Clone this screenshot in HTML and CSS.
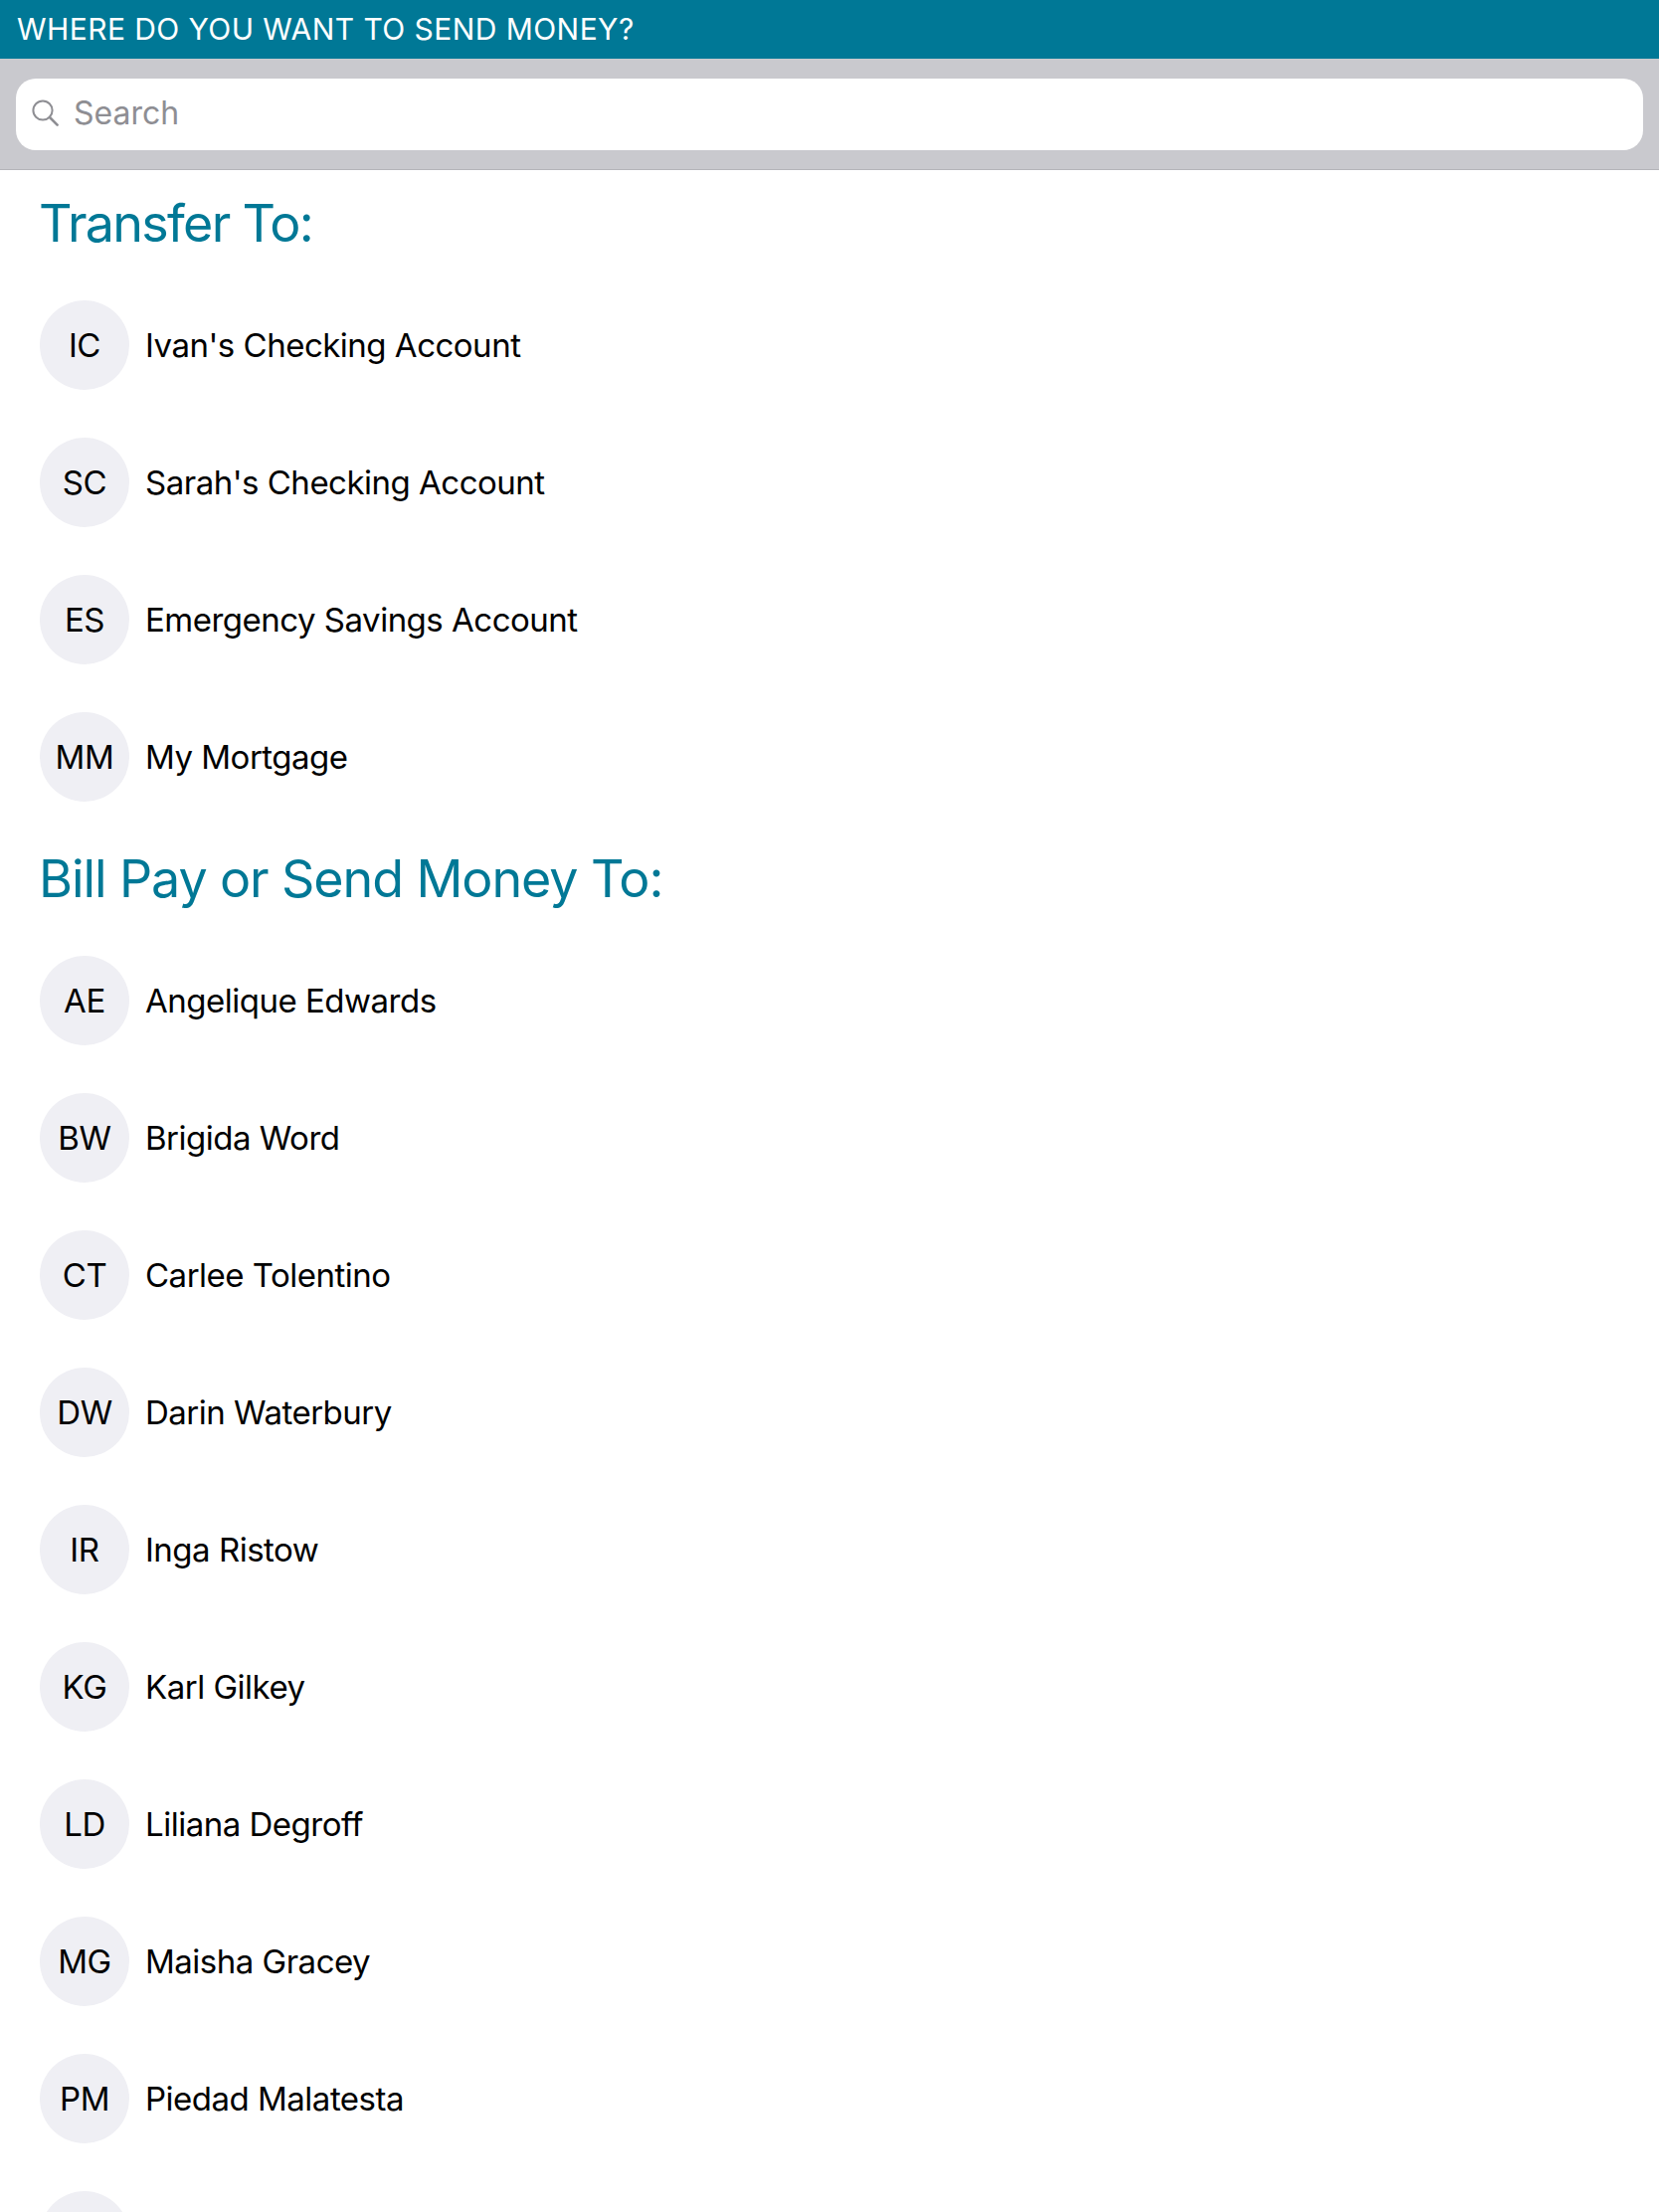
FILE: index.html
```html
<!DOCTYPE html>
<html lang="en">
<head>
    <meta charset="UTF-8">
    <meta name="viewport" content="width=device-width, initial-scale=1.0">
    <title>Where do you want to send money?</title>
    <link rel="stylesheet" href="styles.css">
</head>
<body>
    <div class="top-bar">WHERE DO YOU WANT TO SEND MONEY?</div>

    <div class="search-bar">
        <div class="search-field">
            <svg class="search-icon" viewBox="0 0 27 27" width="27" height="27" aria-hidden="true">
                <circle cx="11" cy="11" r="9.6" fill="none" stroke="#8e8e93" stroke-width="2"></circle>
                <path d="M18 18 L25.6 25.6" fill="none" stroke="#8e8e93" stroke-width="2.6" stroke-linecap="round"></path>
            </svg>
            <span class="search-text">Search</span>
        </div>
    </div>

    <div class="content">
        <h2 class="section-title first">Transfer To:</h2>
        <div class="row"><div class="avatar">IC</div><div class="name">Ivan's Checking Account</div></div>
        <div class="row"><div class="avatar">SC</div><div class="name">Sarah's Checking Account</div></div>
        <div class="row"><div class="avatar">ES</div><div class="name">Emergency Savings Account</div></div>
        <div class="row"><div class="avatar">MM</div><div class="name">My Mortgage</div></div>

        <h2 class="section-title">Bill Pay or Send Money To:</h2>
        <div class="row"><div class="avatar">AE</div><div class="name">Angelique Edwards</div></div>
        <div class="row"><div class="avatar">BW</div><div class="name">Brigida Word</div></div>
        <div class="row"><div class="avatar">CT</div><div class="name">Carlee Tolentino</div></div>
        <div class="row"><div class="avatar">DW</div><div class="name">Darin Waterbury</div></div>
        <div class="row"><div class="avatar">IR</div><div class="name">Inga Ristow</div></div>
        <div class="row"><div class="avatar">KG</div><div class="name">Karl Gilkey</div></div>
        <div class="row"><div class="avatar">LD</div><div class="name">Liliana Degroff</div></div>
        <div class="row"><div class="avatar">MG</div><div class="name">Maisha Gracey</div></div>
        <div class="row"><div class="avatar">PM</div><div class="name">Piedad Malatesta</div></div>
        <!-- cut off by the bottom of the window -->
        <div class="row last"><div class="avatar"></div></div>
    </div>
</body>
</html>
```

FILE: styles.css
```css
html, body {
    margin: 0;
    height: 2224px;
    overflow: hidden;
    background: #fff;
}
body {
    font-family: Inter, "Noto Sans", sans-serif;
    color: #000;
}
.top-bar {
    height: 59px;
    line-height: 59px;
    padding-left: 17px;
    background: #007896;
    color: #fff;
    font-size: 30px;
    letter-spacing: 0.43px;
    white-space: nowrap;
}
.search-bar {
    height: 112px;
    padding: 20px 16px;
    box-sizing: border-box;
    background: #c9c9ce;
    border-bottom: 1px solid #b4b4b9;
}
.search-field {
    height: 72px;
    box-sizing: border-box;
    display: flex;
    align-items: center;
    padding: 0 0 3px 16px;
    background: #fff;
    border-radius: 20px;
}
.search-icon {
    flex: none;
    margin-right: 15px;
}
.search-text {
    font-size: 32px;
    color: #8e8e93;
}
.content {
    padding: 0 40px;
}
.section-title {
    margin: 0 0 0 -1px;
    height: 107px;
    line-height: 60px;
    font-size: 52px;
    font-weight: 400;
    letter-spacing: -1.1px;
    color: #007896;
    white-space: nowrap;
}
.section-title.first {
    height: 131px;
    line-height: 108px;
    letter-spacing: -1.7px;
}
.row {
    display: flex;
    align-items: center;
    height: 90px;
    margin-bottom: 48px;
}
.row.last {
    margin-bottom: 0;
}
.avatar {
    flex: none;
    width: 90px;
    height: 90px;
    border-radius: 50%;
    display: flex;
    align-items: center;
    justify-content: center;
    background: #efeff4;
    font-size: 33px;
    letter-spacing: -0.4px;
}
.name {
    margin-left: 16px;
    font-size: 33px;
    letter-spacing: -0.5px;
    white-space: nowrap;
}
```
